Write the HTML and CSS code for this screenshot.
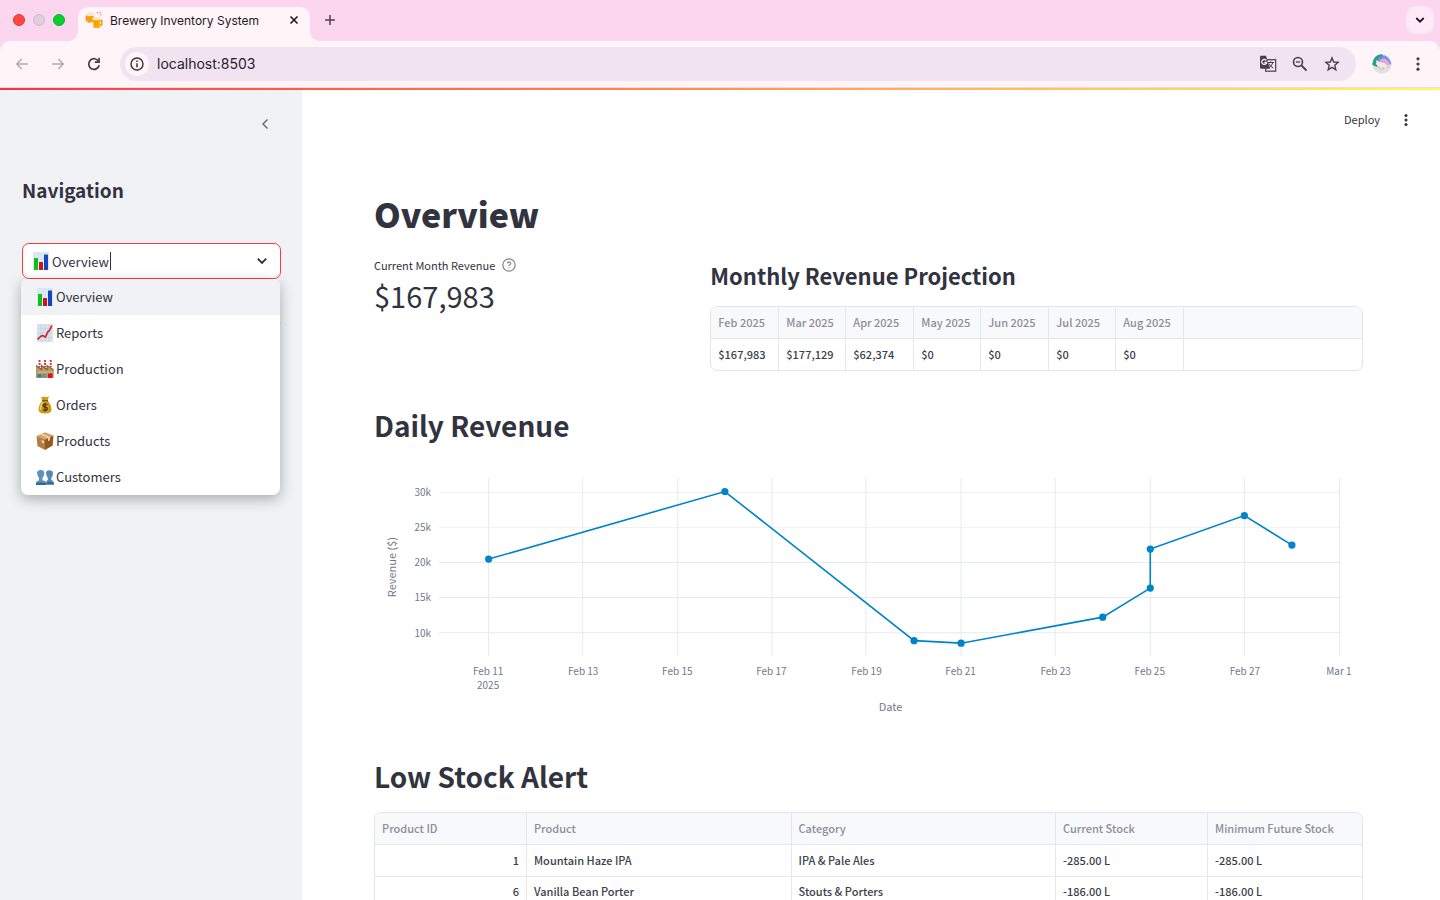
FILE: index.html
```html
<!DOCTYPE html>
<html lang="en">
<head>
<meta charset="utf-8">
<title>Brewery Inventory System</title>
<link rel="stylesheet" href="styles.css">
</head>
<body>
<div class="window">
  <header class="browser">
    <div class="tabstrip">
      <div class="lights"><span class="light light-close"></span><span class="light light-min"></span><span class="light light-max"></span></div>
      <div class="tab">
        <svg class="favicon" viewBox="0 0 18 18" aria-hidden="true">
          <path d="M3.500 9H1.300V5.200H3" fill="none" stroke="#e39a1c" stroke-width="1.400"/>
          <path d="M1.500 4L8.500 3.500L9.500 11L2.500 12Z" fill="#f9a71a"/>
          <path d="M1.300 2.800Q2.500 1 4.300 1.800Q6 .3 7.500 1.500Q9.700 1.400 9.500 3.500L9.300 5L2 5Z" fill="#f7e6cf"/>
          <path d="M15 9.500H16.800V14H15" fill="none" stroke="#e39a1c" stroke-width="1.400"/>
          <path d="M8 8.500H15.300L15 17H8.500Z" fill="#ffb300"/>
          <path d="M10 10V15M12.200 10V15M4.500 6.500L5 10M7 6.300L7.400 9" stroke="#e08a00" stroke-width=".8"/>
          <path d="M7.500 8.800Q6.800 6.600 9 6.500Q10.500 5.200 12 6.300Q14.200 5.500 15.500 7.300Q15.900 8.800 15 9Z" fill="#f5e4c8"/>
          <path d="M12 1L13 2.500M15.500 .8L14.800 2.200M16.800 3.500L15.500 4" stroke="#ef6c4f" stroke-width="1"/>
        </svg>
        <span class="tab-title">Brewery Inventory System</span>
        <button class="icon-btn tab-close" aria-label="Close tab"><svg width="10" height="10" viewBox="0 0 10 10"><path d="M1.500 1.500L8.500 8.500M8.500 1.500L1.500 8.500" stroke="#1f1a1e" stroke-width="1.600"/></svg></button>
      </div>
      <button class="icon-btn new-tab" aria-label="New tab"><svg width="12" height="12" viewBox="0 0 12 12"><path d="M6 1V11M1 6H11" stroke="#52424e" stroke-width="1.500"/></svg></button>
      <button class="tab-search" aria-label="Search tabs"><svg width="10" height="8" viewBox="0 0 10 8"><path d="M1.300 2L5 5.700L8.700 2" fill="none" stroke="#1f1a1e" stroke-width="1.800"/></svg></button>
    </div>
    <div class="toolbar">
      <div class="nav-buttons">
        <button class="icon-btn" aria-label="Back"><svg width="14" height="12" viewBox="0 0 14 12"><path d="M13 6H1.800M6.800 1L1.800 6L6.800 11" fill="none" stroke="#b5a8b1" stroke-width="1.500"/></svg></button>
        <button class="icon-btn" aria-label="Forward"><svg width="14" height="12" viewBox="0 0 14 12"><path d="M1 6H12.200M7.200 1L12.200 6L7.200 11" fill="none" stroke="#b5a8b1" stroke-width="1.500"/></svg></button>
        <button class="icon-btn" aria-label="Reload"><svg width="14" height="14" viewBox="0 0 14 14"><path d="M11.600 4.300A5.300 5.300 0 1 0 12.200 8.300" fill="none" stroke="#4b3a47" stroke-width="1.700"/><path d="M12.900 .8V5.900H7.800V4.300H11.300V.8Z" fill="#4b3a47"/></svg></button>
      </div>
      <div class="omnibox">
        <button class="site-info" aria-label="View site information"><svg width="14" height="14" viewBox="0 0 14 14"><circle cx="7" cy="7" r="6" fill="none" stroke="#3d3039" stroke-width="1.400"/><path d="M7 6.200V10.200M7 3.600V5" stroke="#3d3039" stroke-width="1.500"/></svg></button>
        <input class="url" type="text" aria-label="Address" value="localhost:8503">
        <div class="omni-actions">
          <button class="icon-btn" aria-label="Translate"><svg width="18" height="18" viewBox="0 0 18 18"><rect x="6.700" y="4.700" width="10" height="11.500" fill="none" stroke="#4b3f49" stroke-width="1.200"/><path d="M8.800 7.500H15M11.800 6.300V7.500M13.900 7.700Q12.800 11 9.600 13M10 8.500Q11.500 12 14.300 13" fill="none" stroke="#4b3f49" stroke-width="1"/><path d="M1.500 .8H7L11 13.700H2.500Q1 13.700 1 12.500V1.500Z" fill="#4b3f49"/><path d="M7.300 5.500A2.500 2.500 0 1 0 7.700 7.500H5.300" fill="none" stroke="#f8eef7" stroke-width="1.300"/></svg></button>
          <button class="icon-btn" aria-label="Zoom"><svg width="16" height="16" viewBox="0 0 16 16"><circle cx="6" cy="6" r="4.500" fill="none" stroke="#4b3f49" stroke-width="1.600"/><path d="M9.500 9.500L14.500 14.500" stroke="#4b3f49" stroke-width="1.800"/><path d="M3.900 6H8.100" stroke="#4b3f49" stroke-width="1.300"/></svg></button>
          <button class="icon-btn" aria-label="Bookmark this tab"><svg width="16" height="16" viewBox="0 0 16 16"><path d="M8 1.900L9.700 6L14.100 6.400L10.800 9.300L11.800 13.700L8 11.400L4.200 13.700L5.200 9.300L1.900 6.400L6.300 6Z" fill="none" stroke="#4b3f49" stroke-width="1.400"/></svg></button>
        </div>
      </div>
      <button class="icon-btn avatar" aria-label="Profile"><svg width="20" height="20" viewBox="0 0 20 20"><circle cx="10" cy="10" r="9.700" fill="#e2e0e0"/><path d="M.5 11A9.500 9.500 0 0 1 10 .3L13 4L5 13Z" fill="#1fa58a"/><path d="M5 7Q8 1 13 1.500Q18 4 19.300 10L14 11Z" fill="#6f8fe8"/><path d="M7 7Q11 3 14.500 5.500Q18 8 18.500 11L12 12Z" fill="#e2a5d9"/><path d="M4.500 6L7.500 8L13 9L15.500 12L12.500 13.500L6 12.500L4 10Z" fill="#f3e9dc"/><path d="M6 12.500L9 16M12 13L10.500 16M15 12L17 14" stroke="#c9bba8" stroke-width="1"/></svg></button>
      <button class="icon-btn chrome-menu" aria-label="Browser menu"><svg width="4" height="14" viewBox="0 0 4 14" fill="#4b3a47"><circle cx="2" cy="1.800" r="1.600"/><circle cx="2" cy="7" r="1.600"/><circle cx="2" cy="12.200" r="1.600"/></svg></button>
    </div>
  </header>
  <div class="rainbow"></div>
  <div class="app">
    <aside class="sidebar">
      <button class="icon-btn collapse" aria-label="Collapse sidebar"><svg width="8" height="12" viewBox="0 0 8 12"><path d="M6.500 1.500L2 6L6.500 10.500" fill="none" stroke="#6c6e7c" stroke-width="1.500"/></svg></button>
      <h2 class="nav-title">Navigation</h2>
      <div class="combo">
        <div class="combo-box">
          <svg class="emoji" viewBox="0 0 18 18" aria-hidden="true"><rect x="1" width="16" height="18" fill="#dce8f1"/><rect x="2" y="6" width="4" height="12" rx=".5" fill="#0bbf1c"/><rect x="7" y="10" width="4" height="8" rx=".5" fill="#cb1220"/><rect x="12" y="2.500" width="4" height="15.500" rx=".5" fill="#1248bd"/></svg>
          <input class="combo-input" type="text" role="combobox" aria-label="Navigation" aria-expanded="true" aria-controls="pages" value="Overview"><span class="caret"></span>
          <svg class="combo-arrow" width="12" height="8" viewBox="0 0 12 8"><path d="M1.800 1.700L6 5.900L10.200 1.700" fill="none" stroke="#31333f" stroke-width="1.900"/></svg>
        </div>
        <ul class="menu" id="pages" role="listbox">
          <li class="option option-active" role="option" aria-selected="true"><svg class="emoji" viewBox="0 0 18 18"><rect x="1" width="16" height="18" fill="#dce8f1"/><rect x="2" y="6" width="4" height="12" rx=".5" fill="#0bbf1c"/><rect x="7" y="10" width="4" height="8" rx=".5" fill="#cb1220"/><rect x="12" y="2.500" width="4" height="15.500" rx=".5" fill="#1248bd"/></svg>Overview</li>
          <li class="option" role="option"><svg class="emoji" viewBox="0 0 18 18"><rect x="1" width="16" height="18" fill="#d8e3ec"/><path d="M1 4.500H17M1 9H17M1 13.500H17M5 0V18M9 0V18M13 0V18" stroke="#bfd0dd" stroke-width=".6"/><path d="M1.500 15.500L4.500 12.500L6.500 11.500L9.500 13L12 7.500L13.500 6.500L15.800 1.500" fill="none" stroke="#d5232d" stroke-width="1.700" stroke-linejoin="round"/></svg>Reports</li>
          <li class="option" role="option"><svg class="emoji" viewBox="0 0 18 18"><path d="M3.500 0V7M9 0V7M14.700 0V7" stroke="#e6323a" stroke-width="2" stroke-dasharray="2 1"/><path d="M0 5L5.500 9V5.500L11 9V5.500L17 9.500L17.700 9V18H0Z" fill="#b89a69"/><path d="M0 5.500L5.500 9.500V5.500L11 9.500V5.500L17.500 9.800" fill="none" stroke="#80653d" stroke-width="1.200"/><path d="M2 12H16" stroke="#d9c291"/><rect x="1.500" y="14" width="4" height="3.500" fill="#3f7e96"/><rect x="6.500" y="14" width="4" height="3.500" fill="#6a91a0"/><rect x="12" y="13.500" width="4.500" height="4.500" fill="#e0101c"/></svg>Production</li>
          <li class="option" role="option"><svg class="emoji" viewBox="0 0 18 18"><path d="M5 1.500L8 .5L9.500 1.300L13 .5L11.500 4.500Q15.500 9 15.500 13.500Q15.500 17.500 9 17.500Q2.500 17.500 2.500 13.500Q2.500 9 6.500 4.500Z" fill="#c99b1b"/><path d="M7 6Q4 10 4.500 14" fill="none" stroke="#ecca55" stroke-width="1.500"/><path d="M6 4.700H12" stroke="#80590b" stroke-width="1.200"/><path d="M11.300 8.700Q9 7.400 7.300 8.700Q6.500 10.300 9 11Q12 11.600 11.200 13.500Q9.500 15 6.900 13.700M9.100 7V15.600" fill="none" stroke="#473204" stroke-width="1.200"/></svg>Orders</li>
          <li class="option" role="option"><svg class="emoji" viewBox="0 0 18 18"><path d="M.5 4L9 .2L17.500 3.500L9 7.500Z" fill="#d4a36b"/><path d="M.5 4L9 7.500V18L1.500 14Z" fill="#b77b40"/><path d="M9 7.500L17.500 3.500L16.700 13.500L9 18Z" fill="#935821"/><path d="M4 2.500L12 6.200V9.300L14 8.200V5.100L6.300 1.500Z" fill="#ecd0a5"/><path d="M5.500 8L8 9V11.500L5.600 10.500Z" fill="#e7d3b8"/></svg>Products</li>
          <li class="option" role="option"><svg class="emoji" viewBox="0 0 18 18"><path d="M10.300 16.500Q9.300 13 11.800 12V10Q9.800 7.500 10 4.500Q10.800 2 13.300 2.200Q17 2.300 17 5.300Q17 8 15.300 10V12Q18 12.500 18 16.500Z" fill="#5788b0"/><path d="M0 17V14.500Q.3 13 3 12.200V10Q1 7.500 1 4.800Q1.500 2 4.600 2Q8.300 2 8.300 5.200Q8.300 8 6.500 10V12.200Q10 13 10.300 15V17Z" fill="#5f91bb"/><path d="M0 17V15Q5 13.800 10.300 15.200V17ZM10.800 16.500V14.500Q14.500 13.500 18 15V16.500Z" fill="#356792"/></svg>Customers</li>
        </ul>
      </div>
      <hr class="side-rule">
    </aside>
    <main class="main">
      <div class="app-bar">
        <button class="deploy">Deploy</button>
        <button class="icon-btn" aria-label="Main menu"><svg width="4" height="12" viewBox="0 0 4 12" fill="#31333f"><circle cx="2" cy="1.600" r="1.500"/><circle cx="2" cy="6" r="1.500"/><circle cx="2" cy="10.400" r="1.500"/></svg></button>
      </div>
      <div class="content">
        <h1 class="page-title">Overview</h1>
        <section class="summary">
          <div class="metric">
            <div class="metric-label">Current Month Revenue
              <button class="icon-btn" aria-label="Help"><svg width="14" height="14" viewBox="0 0 14 14" fill="none" stroke="#83858f"><circle cx="7" cy="7" r="6.200" stroke-width="1.200"/><path d="M5.200 5.500Q5.400 3.900 7 3.900Q8.800 4 8.800 5.500Q8.700 6.500 7 7.200V8.200M7 9.500V10.600" stroke-width="1.100"/></svg></button>
            </div>
            <div class="metric-value">$167,983</div>
          </div>
          <div class="projection">
            <h3 class="sub-title">Monthly Revenue Projection</h3>
            <div class="table-frame">
              <table class="grid months">
                <thead><tr><th>Feb 2025</th><th>Mar 2025</th><th>Apr 2025</th><th>May 2025</th><th>Jun 2025</th><th>Jul 2025</th><th>Aug 2025</th><th></th></tr></thead>
                <tbody><tr><td>$167,983</td><td>$177,129</td><td>$62,374</td><td>$0</td><td>$0</td><td>$0</td><td>$0</td><td></td></tr></tbody>
              </table>
            </div>
          </div>
        </section>
        <h2 class="section-title">Daily Revenue</h2>
        <svg class="chart" viewBox="0 0 988 260" role="img" aria-label="Daily revenue by date">
          <g class="grid-lines">
            <path class="faint" d="M65 22.500H966M65 57.500H966"/>
            <path d="M65 92.500H966M65 127.500H966M65 162.500H966"/>
            <path d="M114.500 8V186M208.500 8V186M303.500 8V186M397.500 8V186M491.500 8V186M586.500 8V186M680.500 8V186M775.500 8V186M869.500 8V186M964.500 8V186"/>
          </g>
          <g class="tick tick-y"><text x="57" y="26">30k</text><text x="57" y="61">25k</text><text x="57" y="96">20k</text><text x="57" y="131">15k</text><text x="57" y="167">10k</text></g>
          <g class="tick"><text x="114" y="205">Feb 11</text><text x="114" y="219">2025</text><text x="209" y="205">Feb 13</text><text x="303" y="205">Feb 15</text><text x="397" y="205">Feb 17</text><text x="492" y="205">Feb 19</text><text x="586" y="205">Feb 21</text><text x="681" y="205">Feb 23</text><text x="775" y="205">Feb 25</text><text x="870" y="205">Feb 27</text><text x="964" y="205">Mar 1</text></g>
          <text class="axis" x="516" y="241">Date</text>
          <text class="axis" transform="translate(22 97) rotate(-90)">Revenue ($)</text>
          <polyline class="line" points="114.500,89 350.500,21.500 539.500,170.500 586.500,173 728,147 775.500,118 775.500,79 869.500,45.500 917,75"/>
          <g class="dots"><circle cx="114.500" cy="89" r="3.600"/><circle cx="350.500" cy="21.500" r="3.600"/><circle cx="539.500" cy="170.500" r="3.600"/><circle cx="586.500" cy="173" r="3.600"/><circle cx="728" cy="147" r="3.600"/><circle cx="775.500" cy="118" r="3.600"/><circle cx="775.500" cy="79" r="3.600"/><circle cx="869.500" cy="45.500" r="3.600"/><circle cx="917" cy="75" r="3.600"/></g>
        </svg>
        <h2 class="section-title">Low Stock Alert</h2>
        <div class="table-frame">
          <table class="grid stock">
            <colgroup><col class="w-narrow"><col class="w-wide"><col class="w-wide"><col class="w-narrow"><col></colgroup>
            <thead><tr><th>Product ID</th><th>Product</th><th>Category</th><th>Current Stock</th><th>Minimum Future Stock</th></tr></thead>
            <tbody>
              <tr><td class="num">1</td><td>Mountain Haze IPA</td><td>IPA &amp; Pale Ales</td><td>-285.00 L</td><td>-285.00 L</td></tr>
              <tr><td class="num">6</td><td>Vanilla Bean Porter</td><td>Stouts &amp; Porters</td><td>-186.00 L</td><td>-186.00 L</td></tr>
            </tbody>
          </table>
        </div>
      </div>
    </main>
  </div>
</div>
</body>
</html>
```
FILE: styles.css
```css
* { box-sizing: border-box; }
body {
  margin: 0;
  font-family: "Noto Sans CJK SC", "Source Sans Pro", sans-serif;
  font-size: 13px;
  color: #31333f;
  background: #fff;
}
button, input { font: inherit; color: inherit; border: 0; background: none; padding: 0; outline: 0; }
h1, h2, h3, ul { margin: 0; padding: 0; }
svg { display: block; flex: none; }
.icon-btn { display: flex; align-items: center; justify-content: center; }

.window { display: flex; flex-direction: column; height: 100vh; overflow: hidden; }

/* Browser frame */
.browser { background: #fcd6ee; font-family: Inter, sans-serif; flex: none; }
.tabstrip { display: flex; align-items: center; height: 41px; padding: 0 6px 2px 13px; }
.lights { display: flex; gap: 8px; width: 65px; }
.light { width: 12px; height: 12px; border-radius: 50%; border: 1px solid; }
.light-close { background: #ff4842; border-color: #e2332e; }
.light-min { background: #e1cedb; border-color: #cdb9c7; }
.light-max { background: #07cf2f; border-color: #05b527; }
.tab {
  position: relative;
  align-self: flex-end;
  display: flex;
  align-items: center;
  width: 232px;
  height: 34px;
  margin-bottom: -2px;
  padding: 0 10px 8px 7px;
  border-radius: 10px 10px 0 0;
  background: #fff4f8;
}
.tab::before, .tab::after { content: ""; position: absolute; bottom: 0; width: 10px; height: 10px; }
.tab::before { right: 100%; background: radial-gradient(circle at 0 0, transparent 10px, #fff4f8 10px); }
.tab::after { left: 100%; background: radial-gradient(circle at 100% 0, transparent 10px, #fff4f8 10px); }
.favicon { width: 18px; height: 18px; margin-right: 7px; }
.tab-title { flex: 1; font-size: 12px; color: #1f1a1e; white-space: nowrap; }
.tab-close { width: 12px; height: 12px; }
.new-tab { width: 20px; height: 20px; margin-left: 10px; }
.tab-search {
  display: flex; align-items: center; justify-content: center;
  width: 28px; height: 28px; margin-left: auto;
  border-radius: 10px; background: #ffe8f7;
}
.toolbar {
  display: flex;
  align-items: center;
  height: 47px;
  padding: 0 20px 0 15px;
  border-bottom: 1px solid #e8dce8;
  border-radius: 10px 10px 0 0;
  background: #fff4f8;
}
.nav-buttons { display: flex; gap: 22px; width: 105px; }
.nav-buttons .icon-btn { width: 14px; height: 14px; }
.omnibox {
  flex: 1;
  display: flex;
  align-items: center;
  height: 34px;
  padding: 0 16px 0 5px;
  border-radius: 17px;
  background: #f1e3f0;
}
.site-info {
  display: flex; align-items: center; justify-content: center;
  width: 24px; height: 24px; border-radius: 50%; background: #fff4f8;
}
.url { flex: 1; min-width: 0; margin-left: 8px; padding-bottom: 1px; font-size: 14px; color: #2a2128; }
.omni-actions { display: flex; gap: 16px; }
.omni-actions .icon-btn { width: 16px; height: 16px; }
.avatar { margin: 0 24px 0 16px; width: 20px; height: 20px; }
.rainbow { flex: none; height: 2px; background: linear-gradient(to right, #ff2f45, #ff4b4b 10%, #ff7f4c 40%, #ffb45a 65%, #ffe05f 88%, #fff95a); }

.app { flex: 1; min-height: 0; display: flex; }

/* Sidebar */
.sidebar { flex: none; width: 302px; padding: 26px 21px 0 22px; background: #f0f2f6; }
.collapse { width: 16px; height: 16px; margin: 0 8px 0 auto; }
.nav-title { margin-top: 42px; font-size: 19px; line-height: 32px; font-weight: 600; }
.combo { position: relative; margin-top: 37px; }
.combo-box {
  display: flex;
  align-items: center;
  height: 36px;
  padding: 0 12px 0 9px;
  border: 1px solid #ff3b42;
  border-radius: 7px;
  background: #fff;
}
.emoji { width: 18px; height: 18px; margin-right: 2px; }
.combo-input { field-sizing: content; height: 20px; }
.caret { width: 1px; height: 18px; margin-left: 1px; background: #31333f; }
.combo-arrow { margin-left: auto; }
.menu {
  position: absolute;
  top: 100%;
  left: -1px;
  z-index: 2;
  width: 100%;
  list-style: none;
  border-radius: 7px;
  overflow: hidden;
  background: #fff;
  box-shadow: 0 4px 14px rgba(0, 0, 0, .3);
}
.option { display: flex; align-items: center; height: 36px; padding: 0 15px 1px; }
.option-active { background: #f0f2f6; }
.side-rule { margin: 44px 0 0; border: 0; border-top: 1px solid #d5d7dd; }

/* Page */
.main { flex: 1; min-width: 0; overflow: hidden; }
.app-bar { display: flex; align-items: center; justify-content: flex-end; gap: 24px; height: 60px; padding-right: 32px; }
.deploy { padding-bottom: 2px; font-size: 11px; }
.content { padding: 38px 77px 0 72px; }
.page-title { font-size: 34px; line-height: 52px; font-weight: 900; }
.summary { display: grid; grid-template-columns: 1fr 2fr; gap: 10px; margin-top: 15px; }
.metric-label { display: flex; align-items: center; gap: 7px; font-size: 11px; line-height: 20px; }
.metric-value { font-size: 29px; line-height: 40px; }
.sub-title { padding-top: 2px; font-size: 22px; line-height: 36px; font-weight: 600; }
.projection .table-frame { margin-top: 13px; }
.table-frame { border: 1px solid #e4e5e9; border-radius: 7px; overflow: hidden; }
.grid { width: 100%; border-collapse: separate; border-spacing: 0; table-layout: fixed; font-size: 11px; }
.grid th, .grid td { padding: 0 7px 2px; height: 32px; line-height: 20px; text-align: left; font-weight: 500; white-space: nowrap; border-right: 1px solid #e6e7eb; }
.grid th { color: #8c8e98; background: #f8f9fb; border-bottom: 1px solid #e4e5e9; }
.grid td { color: #3d3f4a; }
.grid th:last-child, .grid td:last-child { border-right: 0; }
.grid tbody tr + tr td { border-top: 1px solid #e6e7eb; }
.grid .num { text-align: right; }
.months th:nth-child(odd) { width: 68px; }
.months th:nth-child(even) { width: 67px; }
.months th:last-child { width: auto; }
.grid tbody td { height: 31px; }
.w-narrow { width: 15.4%; }
.w-wide { width: 26.8%; }
.section-title { margin-top: 32px; font-size: 28px; line-height: 44px; font-weight: 600; }
.chart { width: 100%; height: auto; margin-top: 23px; }
.chart + .section-title { margin-top: 24px; margin-bottom: 14px; }
.grid-lines { stroke: #e6eaf1; fill: none; }
.grid-lines .faint { stroke: #f0f2f6; }
.tick { font-size: 10px; fill: #747889; text-anchor: middle; }
.tick-y { text-anchor: end; }
.axis { font-size: 11px; fill: #747889; text-anchor: middle; }
.line { fill: none; stroke: #0083c9; stroke-width: 1.600px; }
.dots { fill: #0083c9; }
```
